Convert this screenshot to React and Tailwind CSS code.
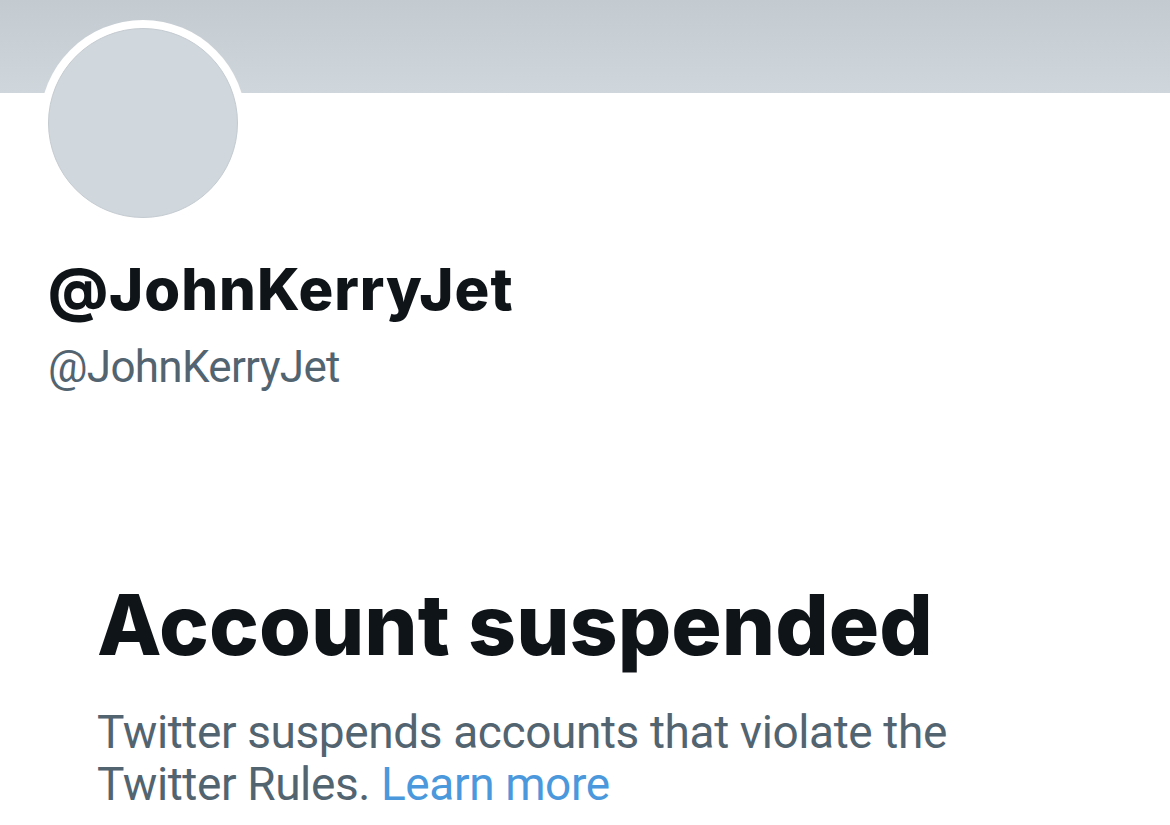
export default function App() {
  return (
    <div
      className="w-[1170px] h-[825px] overflow-hidden bg-white"
      style={{ fontFamily: "Inter, 'Noto Sans', sans-serif" }}
    >
      <div className="h-[93px] bg-gradient-to-b from-[#c4cbd0] to-[#d0d7dc]" />
      <div className="px-[40px]">
        <div className="-mt-[73px] w-[206px] h-[206px] rounded-full bg-white p-[8px]">
          <div className="w-full h-full rounded-full bg-[#d0d7dd] border border-[#c4cbd1]" />
        </div>
      </div>
      <div className="pl-[48px] mt-[31px]">
        <h1 className="text-[58px] leading-[64px] font-extrabold text-[#0f1419] tracking-[1px]">
          @JohnKerryJet
        </h1>
        <p className="mt-[18px] text-[44px] leading-[56px] text-[#536471] font-['Roboto'] tracking-[-0.7px]">
          @JohnKerryJet
        </p>
      </div>
      <div className="pl-[97px] mt-[182px]">
        <h2 className="text-[84px] leading-[96px] font-extrabold text-[#0f1419]">
          Account suspended
        </h2>
        <p className="mt-[33px] text-[46px] leading-[52px] text-[#536471] w-[880px] font-['Roboto'] tracking-[-0.4px]">
          Twitter suspends accounts that violate the Twitter Rules.{" "}
          <span className="text-[#4b98dc]">Learn more</span>
        </p>
      </div>
    </div>
  );
}
